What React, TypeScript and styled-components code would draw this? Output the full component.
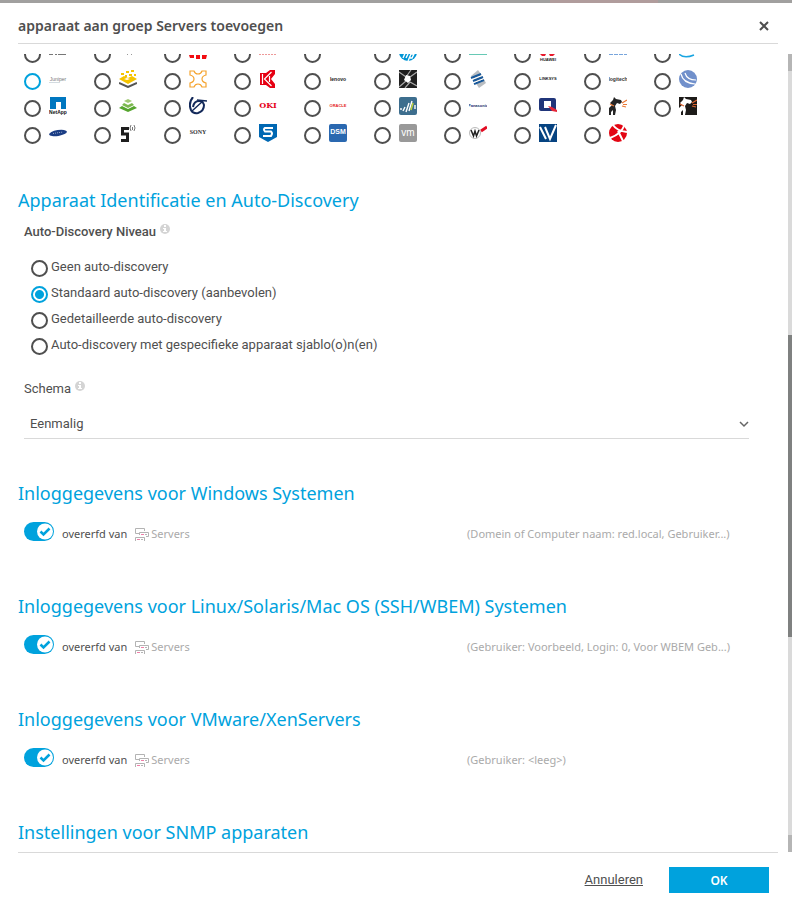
import React, { useState } from "react";
import styled, { createGlobalStyle } from "styled-components";

const Global = createGlobalStyle`
  *, *::before, *::after { box-sizing: border-box; }
  body { margin: 0; background: #fff; color: #4f4f4f; font-family: Roboto, sans-serif; font-size: 13px; }
  button, input, select { font: inherit; color: inherit; margin: 0; }
`;

const BLUE = "#00a2dd";
const NOTO = '"Noto Sans", sans-serif';

const Page = styled.div`
  display: flex;
  flex-direction: column;
  height: 100vh;
  overflow: hidden;
`;
const Backdrop = styled.div`
  flex: none;
  display: flex;
  justify-content: flex-end;
  height: 3px;
  background: #a1a09f;
`;
const BackdropAlert = styled.div`
  width: 108px;
  margin-right: 134px;
  background: #b09c9c;
`;
const Dialog = styled.section`
  flex: 1;
  min-height: 0;
  display: flex;
  flex-direction: column;
`;
const Header = styled.header`
  flex: none;
  display: flex;
  align-items: center;
  justify-content: space-between;
  height: 41px;
  margin: 0 14px 10px 18px;
  padding-top: 6px;
  border-bottom: 1px solid #d9d9d9;
`;
const Title = styled.h1`
  margin: 0;
  font: 600 14px/20px ${NOTO};
`;
const CloseButton = styled.button`
  display: flex;
  padding: 4px;
  margin-right: 5px;
  border: 0;
  background: none;
`;
const Viewport = styled.div`
  flex: 1;
  min-height: 0;
  display: flex;
`;
const Content = styled.div`
  flex: 1;
  min-width: 0;
  overflow: hidden;
  padding: 0 39px 0 18px;
`;
const ScrollTrack = styled.div`
  flex: none;
  display: flex;
  flex-direction: column;
  width: 4px;
  background: #dadada;
`;
const ScrollEnd = styled.div`
  height: 17px;
  background: #b5b5b5;
`;
const ScrollGap = styled.div<{ $grow: number }>`
  flex: ${(p) => p.$grow};
`;
const ScrollThumb = styled.div`
  flex: 302;
  background: #7f8180;
`;
const Radio = styled.input.attrs({ type: "radio" })<{ $accent?: boolean }>`
  appearance: none;
  flex: none;
  width: 17px;
  height: 17px;
  border: 2px solid ${(p) => (p.$accent ? BLUE : "#4f4f4f")};
  border-radius: 50%;
  background: #fff;
  &:checked {
    border-color: ${BLUE};
    background: radial-gradient(circle, ${BLUE} 4px, #fff 5px);
  }
`;
const IconGrid = styled.div`
  display: grid;
  grid-template-columns: repeat(10, 70px);
  grid-auto-rows: 27px;
  margin: -11px 0 36px 6px;
`;
const IconCell = styled.label`
  display: flex;
  align-items: flex-start;
  gap: 8px;
  & > input { margin-top: 3px; }
`;
const Logo = styled.svg`
  display: block;
  flex: none;
  width: 18px;
  height: 18px;
`;
const Heading = styled.h2`
  margin: 0;
  font: 400 18px/26px ${NOTO};
  color: ${BLUE};
`;
const Fields = styled.div`
  padding: 11px 0 41px 6px;
`;
const FieldName = styled.div<{ $strong?: boolean }>`
  display: flex;
  gap: 4px;
  line-height: 16px;
  font-weight: ${(p) => (p.$strong ? 500 : 400)};
`;
const InfoSvg = styled.svg`
  width: 10px;
  height: 10px;
`;
const Options = styled.div`
  display: grid;
  grid-auto-rows: 26px;
  padding: 18px 0 19px 7px;
`;
const Option = styled.label`
  display: flex;
  align-items: flex-start;
  gap: 3px;
  line-height: 18px;
  & > input { margin-top: 2px; }
`;
const SelectBox = styled.div`
  display: grid;
  align-items: center;
  margin-top: 12px;
  border-bottom: 1px solid #d9d9d9;
  & > * { grid-area: 1 / 1; }
  & > svg { justify-self: end; pointer-events: none; }
`;
const Select = styled.select`
  appearance: none;
  width: 100%;
  height: 29px;
  padding: 0 6px;
  border: 0;
  background: none;
`;
const InheritRow = styled.div`
  display: grid;
  grid-template-columns: 11fr 7fr;
  padding: 16px 0 47px 6px;
  font: 11px/24px ${NOTO};
`;
const InheritLabel = styled.div`
  display: flex;
  align-items: flex-start;
  height: 24px;
`;
const Toggle = styled.label`
  display: flex;
  gap: 8px;
  margin-right: 8px;
`;
const Switch = styled.span`
  display: grid;
  width: 30px;
  height: 19px;
  & > * { grid-area: 1 / 1; }
  & > svg { pointer-events: none; }
`;
const SwitchInput = styled.input.attrs({ type: "checkbox", role: "switch" })`
  appearance: none;
  width: 30px;
  height: 19px;
  border-radius: 10px;
  background: #b5b5b5;
  &:checked { background: ${BLUE}; }
`;
const GroupLink = styled.a`
  display: flex;
  gap: 2px;
  color: #aaa;
  text-decoration: none;
  & > svg { margin-top: 6px; }
`;
const Summary = styled.span`
  color: #aaa;
  white-space: nowrap;
`;
const Footer = styled.footer`
  flex: none;
  display: flex;
  align-items: flex-start;
  justify-content: flex-end;
  gap: 26px;
  height: 50px;
  margin: 0 14px 0 18px;
  padding: 14px 9px 0 0;
  border-top: 1px solid #d9d9d9;
`;
const CancelLink = styled.a`
  color: inherit;
  line-height: 26px;
  text-decoration: underline;
`;
const OkButton = styled.button`
  width: 100px;
  height: 26px;
  border: 0;
  background: ${BLUE};
  color: #fff;
  font: 600 12px/26px ${NOTO};
`;

type WordProps = { text: string; y: number; size: number; color: string; weight?: number; family?: string };
const Word = ({ text, y, size, color, weight = 700, family = "Liberation Sans, sans-serif" }: WordProps) => (
  <text x="9" y={y} fontSize={size} fill={color} textAnchor="middle" fontWeight={weight} fontFamily={family}>{text}</text>
);

const Dog = ({ body, flame }: { body: string; flame: string }) => (
  <>
    <path fill={body} d="M0 18V11L3 8 1 6 4 3 5 0 7 2 12 3 13 5 11 7 8 6 6 9 7 13 6 18H4V13L2 15V18Z" />
    <path stroke={flame} strokeWidth="1.200" fill="none" d="M1 7L5 9M13 6L18 3M14 7.500H18M13 9L17 10" />
  </>
);

const logos: { name: string; art: React.ReactNode; accent?: boolean }[] = [
  { name: "Generic", art: <path fill="#777" d="M0 11h4v1H0zM6 11h2v1H6zM9 11h8v1H9z" /> },
  { name: "Apple", art: <path fill="#999" d="M8 11h1v1H8zM12 11h1v1h-1z" /> },
  { name: "Fritz", art: <path fill="#f20d12" d="M0 12h5v3H1zM7 12h4v4H7zM13 12h5l-1 4h-4z" /> },
  { name: "Fujitsu", art: <path stroke="#e99" strokeDasharray="2 1" d="M0 11.500h17" /> },
  { name: "Leeg", art: null },
  { name: "HP", art: <><path fill="#0096d6" d="M0 9h18a9 9 0 0 1-18 0" /><path stroke="#fff" strokeWidth="1.400" fill="none" d="M4 15L7 8M7 15L9 11M9 18L12 11H15L13 15H11" /></> },
  { name: "HPE", art: <path fill="#67c9b5" d="M0 11h18v1H0z" /> },
  { name: "Huawei", art: <><path fill="#e8192c" d="M1 11h6l-1 2H3zM10 11h6l-2 2h-3z" /><Word text="HUAWEI" y={18} size={4} color="#222" /></> },
  { name: "IBM", art: <path stroke="#78a5dc" strokeDasharray="4 1" d="M0 11.500h18" /> },
  { name: "Intel", art: <path stroke="#19a5e1" strokeWidth="1.500" fill="none" d="M0 11Q5 16 15 12" /> },

  { name: "Juniper", accent: true, art: <><Word text="Juniper" y={11} size={5} color="#777" weight={400} /><path stroke="#d3dbe0" d="M0 12.500h11" /></> },
  { name: "Kentix", art: <><path fill="#f5c400" d="M0 9L5 6 9 8 13 6 18 9 9 14ZM2 3h3v2H2zM7 1h3v2H7zM12 0h3v2h-3zM10 4h3v2h-3zM6 5h2v2H6zM15 4h2v2h-2z" /><path fill="#fff" d="M5 9l3-1 3 1-3 1z" /><path fill="none" stroke="#555" strokeWidth="2" d="M0 13L9 17 18 13" /></> },
  { name: "Kemp", art: <path fill="none" stroke="#f5a32e" strokeWidth="1.200" d="M1 1H5Q6 4 9 4T13 1H17V5Q13 6 13 9T17 13V17H13Q12 14 9 14T5 17H1V13Q5 12 5 9T1 5Z" /> },
  { name: "Kyocera", art: <><path fill="#e60012" d="M1 3H7L11 0H16V4L12 9L16 14V18H11L7 15H1Z" /><path fill="none" stroke="#fff" strokeWidth="1.200" d="M3.500 4V14M12.500 2L5.500 9L12.500 16M10.500 6V12" /></> },
  { name: "Lenovo", art: <Word text="lenovo" y={11} size={5} color="#222" /> },
  { name: "Libelium", art: <><path fill="#202020" d="M0 0h18v18H0z" /><path stroke="#aaa" strokeWidth="1.200" d="M0 2L7 7L12 0M18 16L11 12L6 18M0 17L7 11M18 2L11 7" fill="none" /><path fill="#fff" d="M7 5l4 1 1 4-3 3-4-3z" /></> },
  { name: "Lancom", art: <><path fill="#b9bdc1" d="M9 0L12 4 17 13 10 18 8 15 2 6Z" /><path stroke="#18599b" strokeWidth="2" fill="none" d="M2 8L12 4M4 11L14 7M5 14L15 10" /><path stroke="#fff" d="M3 9.500L13 5.500M5 12.500L15 8.500" /></> },
  { name: "Linksys", art: <Word text="LINKSYS" y={10} size={4} color="#222" /> },
  { name: "Logitech", art: <Word text="logitech" y={11} size={5} color="#333" /> },
  { name: "Loxone", art: <><circle cx="9" cy="9" r="9" fill="#7190cb" /><path stroke="#fff" strokeWidth="1.200" fill="none" d="M2 4Q4 13 16 14M6 3Q8 10 17 10" /></> },

  { name: "NetApp", art: <><path fill="#0077c0" d="M1 0h16v12h-5V5H7v7H1z" /><Word text="NetApp" y={17} size={5} color="#111" /></> },
  { name: "Netgate", art: <><path fill="#a0c975" d="M9 2l4 2-4 2-4-2z" /><path fill="#7bb84e" d="M5 6l4 2 4-2 2 2-6 3-6-3z" /><path fill="#55a52e" d="M3 9l6 3 6-3 3 2-9 4-9-4z" /></> },
  { name: "Nortel", art: <><path fill="none" stroke="#13295a" strokeWidth="2" d="M4 0Q-1 6 2 13Q4 17 9 16Q15 14 15 8Q14 4 10 4Q5 4 4 10" /><path stroke="#13295a" strokeWidth="1.400" d="M3 14L14 4M8 3L18 4" /></> },
  { name: "OKI", art: <Word text="OKI" y={11} size={8} color="#e60019" family="DejaVu Serif, serif" /> },
  { name: "Oracle", art: <Word text="ORACLE" y={10} size={4} color="#e51b24" /> },
  { name: "Opengear", art: <><rect width="18" height="18" rx="2" fill="#3d6e8e" /><path stroke="#fff" strokeWidth="1.400" d="M2 13V11M4 14L6 10M7 15L10 6M10 14L13 4M16 12V8" /><path stroke="#bfd33b" strokeWidth="1.500" d="M12 13L14 6" /></> },
  { name: "Panasonic", art: <Word text="Panasonic" y={10} size={4} color="#132b6b" /> },
  { name: "QNAP", art: <><rect y="1" width="17" height="13" rx="2" fill="#20357a" /><path fill="#fff" d="M5 4h7v7H5z" /><path fill="#e52638" d="M9 9l4 1 5 3v2l-5-1z" /></> },
  { name: "Snort licht", art: <Dog body="#252525" flame="#e97835" /> },
  { name: "Snort donker", art: <><path fill="#1d1b19" d="M0 0h18v18H0z" /><Dog body="#fff" flame="#dd6431" /></> },

  { name: "Samsung", art: <><ellipse cx="9" cy="9" rx="9" ry="3" fill="#1b3d85" transform="rotate(-9 9 9)" /><path stroke="#98a8c8" strokeDasharray="1 1" d="M4 9.500L14 8" /></> },
  { name: "Sensirion", art: <><path fill="none" stroke="#1e1e1e" strokeWidth="3" d="M10 4.500H3.500V10H8.500V16.500H2" /><path fill="none" stroke="#777" d="M13.500 3v3M15 1Q17 4 15 7M12 1Q10 4 12 7" /></> },
  { name: "Sony", art: <Word text="SONY" y={10} size={6} color="#333" family="Liberation Serif, serif" /> },
  { name: "Sophos", art: <><path fill="#0068b3" d="M0 0h18v13l-9 5-9-5z" /><path fill="none" stroke="#fff" strokeWidth="2" d="M14 4H6Q4 5 6 7.500H12Q14 9 12 12H4" /></> },
  { name: "Synology DSM", art: <><rect width="18" height="18" rx="2" fill="#2a68b0" /><Word text="DSM" y={10} size={7} color="#fff" /></> },
  { name: "VMware", art: <><rect width="18" height="18" rx="2" fill="#999" /><Word text="vm" y={12} size={10} weight={400} color="#fff" /></> },
  { name: "WatchGuard", art: <><circle cx="6" cy="9" r="5.500" fill="#fff" stroke="#bbb" /><path fill="none" stroke="#222" strokeWidth="1.500" d="M2 6L4.500 12L6 7L7.500 12L10 6" /><path stroke="#e20b22" strokeWidth="3" d="M12 7L18 3" /></> },
  { name: "Western Digital", art: <><path fill="#064381" d="M0 0h18v18H0z" /><path stroke="#fff" strokeWidth="2" fill="none" d="M1 3L7 15M6 3L11 15L17 1" /></> },
  { name: "Xerox", art: <><circle cx="9" cy="9" r="9" fill="#e30613" /><path fill="none" stroke="#fff" strokeWidth="2" d="M4 1Q8 7 18 8M15 2Q12 10 1 14M9 7L14 17" /></> },
];

const options = [
  "Geen auto-discovery",
  "Standaard auto-discovery (aanbevolen)",
  "Gedetailleerde auto-discovery",
  "Auto-discovery met gespecifieke apparaat sjablo(o)n(en)",
];

const credentials = [
  ["Inloggegevens voor Windows Systemen", "(Domein of Computer naam: red.local, Gebruiker...)"],
  ["Inloggegevens voor Linux/Solaris/Mac OS (SSH/WBEM) Systemen", "(Gebruiker: Voorbeeld, Login: 0, Voor WBEM Geb...)"],
  ["Inloggegevens voor VMware/XenServers", "(Gebruiker: <leeg>)"],
];

const Info = () => (
  <InfoSvg viewBox="0 0 10 10" aria-hidden="true">
    <circle cx="5" cy="5" r="5" fill="#d4d4d4" />
    <path fill="#fff" d="M4 1h2v2H4zM3 4h3v3h1v1H3V7h1V5H3z" />
  </InfoSvg>
);

const ServersIcon = () => (
  <svg width="14" height="13" viewBox="0 0 14 13" aria-hidden="true">
    <path fill="none" stroke="#b3b3b3" d="M9.500 3V.5H.5V5.500H4M4.500 7V4.500H13.500V8.500H11M.5 13V9.500H9.500V13" />
    <path stroke="#f07fa8" d="M6 6.500H9M2 11.500H5" />
    <path stroke="#b3b3b3" d="M10 6.500H12M6 11.500H8" />
  </svg>
);

function Inherit({ title, summary }: { title: string; summary: string }) {
  const [on, setOn] = useState(true);
  return (
    <section>
      <Heading>{title}</Heading>
      <InheritRow>
        <InheritLabel>
          <Toggle>
            <Switch>
              <SwitchInput checked={on} onChange={() => setOn(!on)} />
              <svg width="30" height="19" viewBox="0 0 30 19" aria-hidden="true">
                <circle cx={on ? 21 : 9} cy="9.500" r="8" fill="#fff" />
                {on && <path fill="none" stroke={BLUE} strokeWidth="2.500" d="M16.500 9.500L19.500 12.500L25.500 6.500" />}
              </svg>
            </Switch>
            <span>overerfd van</span>
          </Toggle>
          <GroupLink href="#servers"><ServersIcon />Servers</GroupLink>
        </InheritLabel>
        <Summary>{summary}</Summary>
      </InheritRow>
    </section>
  );
}

export default function App() {
  const [icon, setIcon] = useState("");
  const [level, setLevel] = useState(1);
  return (
    <Page>
      <Global />
      <Backdrop><BackdropAlert /></Backdrop>
      <Dialog role="dialog" aria-labelledby="dialog-title">
        <Header>
          <Title id="dialog-title">apparaat aan groep Servers toevoegen</Title>
          <CloseButton aria-label="Sluiten">
            <svg width="10" height="10" viewBox="0 0 10 10"><path stroke="#4f4f4f" strokeWidth="2" d="M1 1L9 9M9 1L1 9" /></svg>
          </CloseButton>
        </Header>
        <Viewport>
          <Content>
            <IconGrid role="radiogroup" aria-label="Apparaat icoon">
              {logos.map((l) => (
                <IconCell key={l.name}>
                  <Radio name="icon" aria-label={l.name} $accent={l.accent} checked={icon === l.name} onChange={() => setIcon(l.name)} />
                  <Logo viewBox="0 0 18 18" aria-hidden="true">{l.art}</Logo>
                </IconCell>
              ))}
            </IconGrid>
            <Heading>Apparaat Identificatie en Auto-Discovery</Heading>
            <Fields>
              <FieldName $strong><span id="level-name">Auto-Discovery Niveau</span><Info /></FieldName>
              <Options role="radiogroup" aria-labelledby="level-name">
                {options.map((o, i) => (
                  <Option key={o}>
                    <Radio name="level" checked={level === i} onChange={() => setLevel(i)} />
                    {o}
                  </Option>
                ))}
              </Options>
              <FieldName><label htmlFor="schema">Schema</label><Info /></FieldName>
              <SelectBox>
                <Select id="schema" defaultValue="once"><option value="once">Eenmalig</option></Select>
                <svg width="10" height="8" viewBox="0 0 10 8" aria-hidden="true"><path fill="none" stroke="#666" strokeWidth="1.500" d="M1 2L5 6L9 2" /></svg>
              </SelectBox>
            </Fields>
            {credentials.map(([title, summary]) => <Inherit key={title} title={title} summary={summary} />)}
            <Heading>Instellingen voor SNMP apparaten</Heading>
          </Content>
          <ScrollTrack aria-hidden="true">
            <ScrollEnd /><ScrollGap $grow={264} /><ScrollThumb /><ScrollGap $grow={198} /><ScrollEnd />
          </ScrollTrack>
        </Viewport>
        <Footer>
          <CancelLink href="#cancel">Annuleren</CancelLink>
          <OkButton>OK</OkButton>
        </Footer>
      </Dialog>
    </Page>
  );
}
